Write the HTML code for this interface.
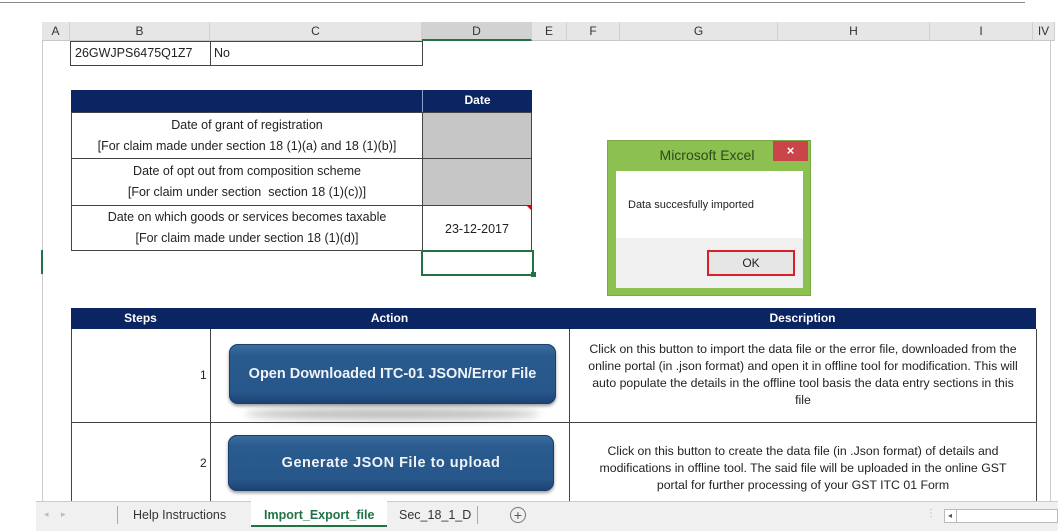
<!DOCTYPE html>
<html><head><style>
*{margin:0;padding:0;box-sizing:border-box}
body{width:1058px;height:531px;background:#fff;position:relative;overflow:hidden;font-family:"Liberation Sans",Arial,sans-serif}
.a{position:absolute}
.hdr{top:22px;height:19px;background:#e6e6e6;border-bottom:1px solid #c8c8c8;font-size:12px;color:#333;text-align:center;line-height:19px;border-right:1px solid #d0d0d0}
.cell{border:1px solid #444;font-size:12.5px;color:#222;text-align:center;display:flex;align-items:center;justify-content:center;line-height:21px}
.navy{background:#0b2462;color:#fff;font-weight:bold;font-size:12px;text-align:center;line-height:21px}
.btn{background:linear-gradient(#3c6ea1,#2a5b8e 20%,#26568a 80%,#1b4271);border-radius:9px;color:#f0f4f8;font-weight:bold;font-size:14.5px;text-align:center;box-shadow:inset 0 0 0 1px #1a3f6a,0 2px 3px rgba(0,0,0,.4)}
.desc{font-size:12.3px;color:#222;text-align:center;line-height:17px;white-space:nowrap}
</style></head><body>
<div class="a" style="left:0;top:2px;width:1025px;height:1px;background:#888"></div>
<div class="a" style="left:42px;top:22px;width:1010px;height:480px;border-left:1px solid #ccc"></div>
<div class="a hdr" style="left:42px;width:28px">A</div>
<div class="a hdr" style="left:70px;width:140px">B</div>
<div class="a hdr" style="left:210px;width:212px">C</div>
<div class="a hdr" style="left:422px;width:110px;background:#d2d2d2;border-bottom:2px solid #217346">D</div>
<div class="a hdr" style="left:532px;width:35px">E</div>
<div class="a hdr" style="left:567px;width:53px">F</div>
<div class="a hdr" style="left:620px;width:158px">G</div>
<div class="a hdr" style="left:778px;width:152px">H</div>
<div class="a hdr" style="left:930px;width:103px">I</div>
<div class="a hdr" style="left:1033px;width:22px">IV</div>
<div class="a" style="left:1050px;top:41px;width:1px;height:461px;background:#ccc"></div>

<div class="a cell" style="left:70px;top:41px;width:141px;height:25px;justify-content:flex-start;padding-left:4px">26GWJPS6475Q1Z7</div>
<div class="a cell" style="left:210px;top:41px;width:213px;height:25px;justify-content:flex-start;padding-left:3px">No</div>

<div class="a navy" style="left:71px;top:90px;width:351px;height:22px"></div>
<div class="a navy" style="left:422px;top:90px;width:110px;height:22px;border-left:1px solid #8aa0c8">Date</div>
<div class="a cell" style="left:71px;top:112px;width:352px;height:47px">Date of grant of registration<br>[For claim made under section 18 (1)(a) and 18 (1)(b)]</div>
<div class="a cell" style="left:422px;top:112px;width:110px;height:47px;background:#c6c6c6"></div>
<div class="a cell" style="left:71px;top:158px;width:352px;height:48px">Date of opt out from composition scheme<br>[For claim under section&nbsp; section 18 (1)(c))]</div>
<div class="a cell" style="left:422px;top:158px;width:110px;height:48px;background:#c6c6c6"></div>
<div class="a cell" style="left:71px;top:205px;width:352px;height:46px">Date on which goods or services becomes taxable<br>[For claim made under section 18 (1)(d)]</div>
<div class="a cell" style="left:422px;top:205px;width:110px;height:46px;padding-top:2px">23-12-2017</div>
<div class="a" style="left:526px;top:205px;width:0;height:0;border-left:6px solid transparent;border-top:6px solid #d00"></div>
<div class="a" style="left:421px;top:250px;width:113px;height:26px;border:2px solid #217346"></div>
<div class="a" style="left:531px;top:272px;width:5px;height:5px;background:#217346"></div>
<div class="a" style="left:41px;top:250px;width:2px;height:24px;background:#217346"></div>

<!-- dialog -->
<div class="a" style="left:607px;top:140px;width:204px;height:156px;background:#8cc152;border:1px solid #7aa845"></div>
<div class="a" style="left:607px;top:147px;width:204px;text-align:center;font-size:14px;color:#2d4a1a;padding-right:4px">Microsoft Excel</div>
<div class="a" style="left:773px;top:141px;width:35px;height:20px;background:#c9454a;color:#fff;text-align:center;font-size:13px;line-height:20px;font-weight:bold">×</div>
<div class="a" style="left:616px;top:171px;width:187px;height:67px;background:#fff"></div>
<div class="a" style="left:628px;top:199px;font-size:11px;color:#222">Data succesfully imported</div>
<div class="a" style="left:616px;top:238px;width:187px;height:50px;background:#f0f0f0"></div>
<div class="a" style="left:707px;top:250px;width:88px;height:26px;border:2px solid #d8202c;background:#e6e6e6;text-align:center;font-size:12px;line-height:22px;color:#222">OK</div>

<!-- steps table -->
<div class="a navy" style="left:71px;top:308px;width:139px;height:21px">Steps</div>
<div class="a navy" style="left:210px;top:308px;width:359px;height:21px">Action</div>
<div class="a navy" style="left:569px;top:308px;width:467px;height:21px">Description</div>
<div class="a" style="left:71px;top:329px;width:966px;height:180px;border:1px solid #444;border-top:none"></div>
<div class="a" style="left:71px;top:422px;width:966px;height:1px;background:#444"></div>
<div class="a" style="left:210px;top:329px;width:1px;height:180px;background:#444"></div>
<div class="a" style="left:569px;top:329px;width:1px;height:180px;background:#444"></div>
<div class="a" style="left:200px;top:368px;font-size:12px;color:#222">1</div>
<div class="a" style="left:200px;top:456px;font-size:12px;color:#222">2</div>
<div class="a" style="left:245px;top:408px;width:295px;height:12px;border-radius:50%;background:rgba(0,0,0,.25);filter:blur(4px)"></div>
<div class="a btn" style="left:229px;top:344px;width:327px;height:60px;line-height:60px">Open Downloaded ITC-01 JSON/Error File</div>
<div class="a btn" style="left:228px;top:435px;width:326px;height:56px;line-height:56px;letter-spacing:.5px">Generate JSON File to upload</div>
<div class="a desc" style="left:570px;top:341px;width:466px">Click on this button to import the data file or the error file, downloaded from the<br>online portal (in .json format) and open it in offline tool for modification. This will<br>auto populate the details in the offline tool basis the data entry sections in this<br>file</div>
<div class="a desc" style="left:570px;top:443px;width:466px">Click on this button to create the data file (in .Json format) of details and<br>modifications in offline tool. The said file will be uploaded in the online GST<br>portal for further processing of your GST ITC 01 Form</div>

<!-- tab bar -->
<div class="a" style="left:36px;top:501px;width:1022px;height:30px;background:#f0f0f0;border-top:1px solid #ccc"></div>
<div class="a" style="left:44px;top:509px;font-size:9px;color:#bbb">◂ &nbsp; &nbsp; ▸</div>
<div class="a" style="left:117px;top:506px;width:1px;height:18px;background:#aaa"></div>
<div class="a" style="left:133px;top:508px;font-size:12.5px;color:#333">Help Instructions</div>
<div class="a" style="left:251px;top:501px;width:136px;height:26px;background:#fff;border-bottom:2px solid #217346"></div>
<div class="a" style="left:264px;top:508px;font-size:12.5px;color:#217346;font-weight:bold">Import_Export_file</div>
<div class="a" style="left:399px;top:508px;font-size:12.5px;color:#333">Sec_18_1_D</div>
<div class="a" style="left:477px;top:506px;width:1px;height:18px;background:#aaa"></div>
<div class="a" style="left:510px;top:507px;width:16px;height:16px;border:1px solid #777;border-radius:50%;text-align:center;font-size:14px;line-height:14px;color:#555">+</div>
<div class="a" style="left:926px;top:508px;font-size:10px;color:#aaa">⋮</div>
<div class="a" style="left:944px;top:509px;width:114px;height:14px;background:#fff;border:1px solid #bbb"></div>
<div class="a" style="left:944px;top:509px;width:13px;height:14px;border-right:1px solid #bbb;font-size:8px;text-align:center;line-height:14px;color:#555">◂</div>
</body></html>
